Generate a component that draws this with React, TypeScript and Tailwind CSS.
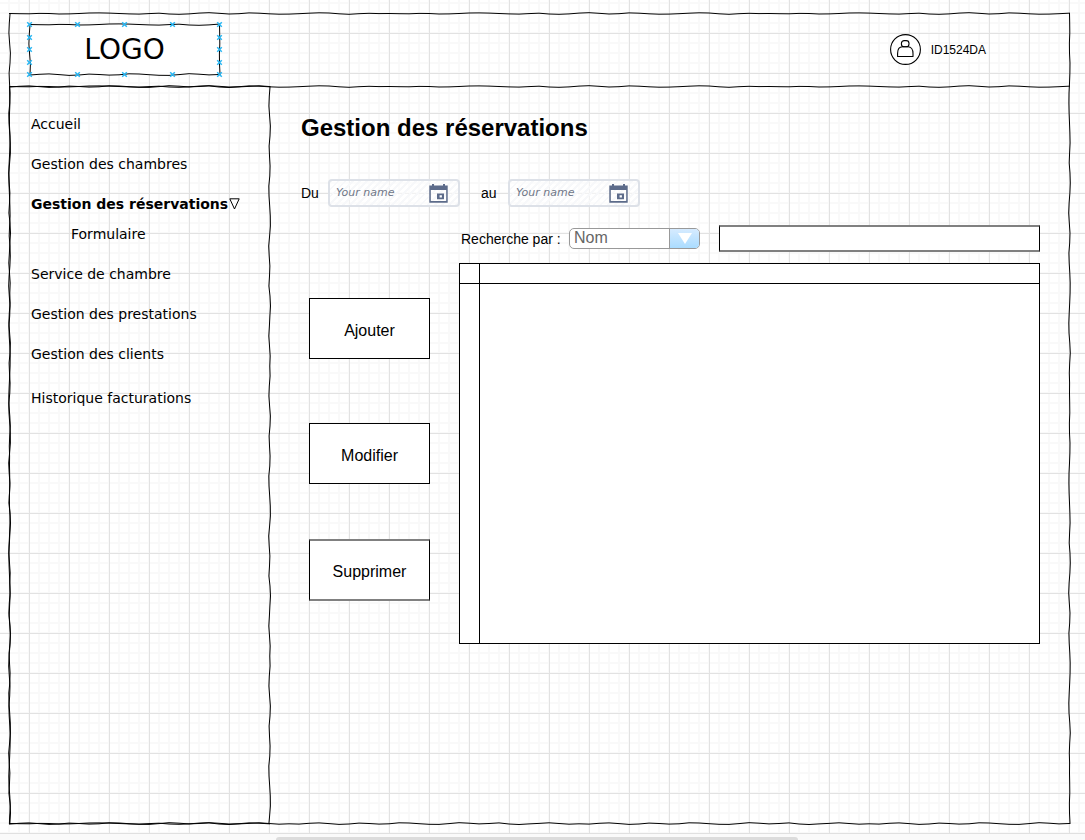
import { useId } from "react";

const WAVE_A = [0, 0.2, 0.3, -0.1, 0, 0.5, 0.4, 0, -0.5, -0.6, -0.4, 0, 0.4, 0.6, 0.1, -0.3, 0.5, 0.8, 0.4, -0.4, -0.8, -0.2, 0.5, 0.2, -0.6, -0.3, 0.3, 0.7, 0.6, 0.2, -0.3, -0.7, -0.5, 0.3, 0.8, 0.2, -0.2, 0.1];
const WAVE_B = [0.6, -0.2, -0.6, 0.1, 0.9, 0.5, -0.4, 0, 0.6, 0.3, -0.7, -0.5, 0.2, 0.8, 0.9, 0.1, -0.8, -0.3, 0.4, 0, -0.6, 0.5, 1, 0.4, -0.1, -0.7, 0, 0.7, 0.3];

type EdgeProps = {
  wave: number[];
  vertical?: boolean;
  className: string;
};

function Edge({ wave, vertical = false, className }: EdgeProps) {
  const id = useId();
  const length = wave.length * 10;
  const points = [...wave, wave[0]]
    .map((offset, i) => (vertical ? `${2.5 + offset},${i * 10}` : `${i * 10},${2.5 + offset}`))
    .join(" ");
  return (
    <svg aria-hidden="true" className={`pointer-events-none absolute ${className}`}>
      <defs>
        <pattern
          id={id}
          patternUnits="userSpaceOnUse"
          width={vertical ? 5 : length}
          height={vertical ? length : 5}
        >
          <polyline points={points} fill="none" stroke="#000" strokeWidth="1" />
        </pattern>
      </defs>
      <rect width="100%" height="100%" fill={`url(#${id})`} />
    </svg>
  );
}

function SketchFrame({ first, second }: { first: number[]; second: number[] }) {
  return (
    <>
      <Edge wave={first} className="inset-x-0 -top-[2px] h-[5px] w-full" />
      <Edge wave={second} className="inset-x-0 -bottom-[2px] h-[5px] w-full" />
      <Edge vertical wave={second} className="inset-y-0 -left-[2px] h-full w-[5px]" />
      <Edge vertical wave={first} className="inset-y-0 -right-[2px] h-full w-[5px]" />
    </>
  );
}

const HANDLES: [number, number][] = [
  [0, 0], [48, 0], [95, 0], [143, 0], [190, 0],
  [0, 13], [0, 25], [0, 38],
  [190, 13], [190, 25], [190, 38],
  [0, 50], [48, 50], [95, 50], [143, 50], [190, 50],
];

function Logo() {
  return (
    <div className="relative ml-5 flex h-[51px] w-[191px] items-center justify-center bg-white">
      <SketchFrame first={WAVE_A} second={WAVE_B} />
      <span className="text-[28px] leading-8">LOGO</span>
      <svg
        aria-hidden="true"
        viewBox="0 0 191 51"
        className="absolute inset-0 h-full w-full overflow-visible"
        stroke="#29b6f2"
        strokeWidth="1.5"
      >
        {HANDLES.map(([x, y]) => (
          <path key={`${x}-${y}`} d={`M${x - 1.8} ${y - 1.8}l4.6 4.6m0 -4.6l-4.6 4.6`} />
        ))}
      </svg>
    </div>
  );
}

function UserIcon() {
  return (
    <svg aria-hidden="true" viewBox="0 0 31 31" className="size-[31px]" fill="none" stroke="#000" strokeWidth="1.1">
      <circle cx="15.5" cy="15.5" r="14.9" fill="#fff" />
      <rect x="11.4" y="6.6" width="7.6" height="6.2" rx="2.8" />
      <path d="M7.6 22.5V19.5C7.6 15.6 9.5 12.8 12.5 12.8H18C21 12.8 23 15.6 23 19.5V22.5Z" strokeLinejoin="round" />
    </svg>
  );
}

function DateField({ id, label }: { id: string; label: string }) {
  return (
    <div className="flex items-center">
      <label htmlFor={id} className="w-[27px] text-sm">
        {label}
      </label>
      <div className="flex h-7 w-[132px] items-center rounded-[4px] border-2 border-[#dde1e8] bg-[repeating-linear-gradient(135deg,#f7f8fa_0px,#f7f8fa_2px,#ffffff90_2px,#ffffff90_5px)] pr-[10px] pl-[6px]">
        <input
          id={id}
          type="text"
          placeholder="Your name"
          className="min-w-0 flex-1 bg-transparent font-['DejaVu_Sans',sans-serif] text-[11px] leading-4 italic outline-none placeholder:text-[#6f7788]"
        />
        <svg aria-hidden="true" viewBox="0 0 19 19" className="size-[19px] shrink-0" fill="#5c6b8a">
          <path
            fillRule="evenodd"
            d="M0.3 1.5H3V0H5V1.5H14V0H16V1.5H18.7V18.7H0.3ZM1.8 6V17.1H17.2V6Z"
          />
          <path fillRule="evenodd" d="M8 9.5H15V15.3H8ZM10.6 11.3V13.5H12.9V11.3Z" />
        </svg>
      </div>
    </div>
  );
}

function Sidebar() {
  return (
    <nav aria-label="Menu" className="relative w-[261px] shrink-0 pt-7 pl-[22px] text-[14px] leading-5">
      <SketchFrame first={WAVE_B} second={WAVE_A} />
      <ul className="flex flex-col gap-5">
        <li><a href="#accueil">Accueil</a></li>
        <li><a href="#chambres">Gestion des chambres</a></li>
        <li>
          <a href="#reservations" className="flex items-center gap-px font-bold">
            Gestion des réservations
            <svg aria-hidden="true" viewBox="0 0 11 12" className="h-3 w-[11px]" fill="none" stroke="#000">
              <path d="M0.8 0.8H10.2L5.5 11Z" />
            </svg>
          </a>
          <ul className="mt-[10px] pl-10">
            <li><a href="#formulaire">Formulaire</a></li>
          </ul>
        </li>
        <li><a href="#service">Service de chambre</a></li>
        <li><a href="#prestations">Gestion des prestations</a></li>
        <li><a href="#clients">Gestion des clients</a></li>
        <li className="mt-1"><a href="#historique">Historique facturations</a></li>
      </ul>
    </nav>
  );
}

function SearchRow() {
  return (
    <div className="mt-[18px] flex h-[27px] items-center pl-40">
      <label htmlFor="critere" className="w-[108px] text-sm">
        Recherche par :
      </label>
      <div className="relative h-[21px] w-[131px] overflow-hidden rounded-[5px] border border-[#999] bg-white">
        <select
          id="critere"
          className="block h-[18px] w-full appearance-none pr-8 pl-1 text-base leading-[18px] text-[#666] outline-none"
        >
          <option>Nom</option>
        </select>
        <span className="pointer-events-none absolute inset-y-0 right-0 flex w-[30px] items-center justify-center border-l border-[#999] bg-linear-to-b from-[#d6ebff] to-[#aadcff]">
          <svg aria-hidden="true" viewBox="0 0 14 11" className="h-[11px] w-[14px]" fill="#fff">
            <path d="M0 0H14L7 11Z" />
          </svg>
        </span>
      </div>
      <input
        type="text"
        aria-label="Recherche"
        className="ml-[19px] h-[27px] min-w-0 flex-1 border-x border-y-2 border-x-black border-y-[#808080] bg-white px-2 text-sm outline-none"
      />
    </div>
  );
}

function ResultsTable() {
  return (
    <table aria-label="Réservations" className="h-[381px] flex-1 table-fixed border-collapse border border-black bg-white">
      <colgroup>
        <col className="w-5" />
        <col />
      </colgroup>
      <thead>
        <tr className="h-5">
          <td className="border border-black p-0" />
          <td className="border border-black p-0" />
        </tr>
      </thead>
      <tbody>
        <tr>
          <td className="border border-black p-0" />
          <td className="border border-black p-0" />
        </tr>
      </tbody>
    </table>
  );
}

export default function App() {
  return (
    <div className="flex min-h-screen flex-col bg-white font-['DejaVu_Sans',sans-serif] text-black">
      <div className="flex flex-1 flex-col border-b border-[#e0e0e0] bg-[linear-gradient(to_right,#e2e2e2_1px,transparent_1px),linear-gradient(to_bottom,#e2e2e2_1px,transparent_1px),linear-gradient(to_right,#f9f9f9_2px,transparent_2px),linear-gradient(to_bottom,#f9f9f9_2px,transparent_2px)] bg-[size:40px_40px,40px_40px,10px_10px,10px_10px] bg-[position:29px_33px,29px_33px,8px_2px,8px_2px] pt-[13px] pr-[15px] pb-[9px] pl-[9px]">
        <div className="relative flex flex-1 flex-col">
          <SketchFrame first={WAVE_A} second={WAVE_B} />
          <header className="flex h-[73px] items-center justify-between">
            <Logo />
            <div className="mr-[84px] flex items-center gap-[10px] font-['Liberation_Sans',Arial,sans-serif] text-xs">
              <UserIcon />
              <span>ID1524DA</span>
            </div>
          </header>
          <div className="relative flex flex-1">
            <Edge wave={WAVE_A} className="inset-x-0 -top-[2px] h-[5px] w-full" />
            <Sidebar />
            <main className="min-w-0 flex-1 pt-[26px] pr-[30px] pl-[31px] font-['Liberation_Sans',Arial,sans-serif]">
              <h1 className="text-2xl leading-8 font-bold">Gestion des réservations</h1>
              <div className="mt-[35px] flex gap-[21px]">
                <DateField id="du" label="Du" />
                <DateField id="au" label="au" />
              </div>
              <SearchRow />
              <div className="mt-[11px] flex pl-2">
                <div className="mr-[29px] flex w-[121px] shrink-0 flex-col pt-[35px] text-base">
                  <button type="button" className="h-[61px] border border-black bg-white pt-1">
                    Ajouter
                  </button>
                  <button type="button" className="mt-16 h-[61px] border border-black bg-white pt-1">
                    Modifier
                  </button>
                  <button type="button" className="mt-[55px] h-[62px] border-x border-y-2 border-x-black border-y-[#808080] bg-white pt-1">
                    Supprimer
                  </button>
                </div>
                <ResultsTable />
              </div>
            </main>
          </div>
        </div>
      </div>
      <div className="flex h-[6px] items-end bg-[#fafafa] pr-[287px] pl-[276px]">
        <div className="h-[3px] flex-1 rounded-t-sm bg-[#dcdcdc]" />
      </div>
    </div>
  );
}
